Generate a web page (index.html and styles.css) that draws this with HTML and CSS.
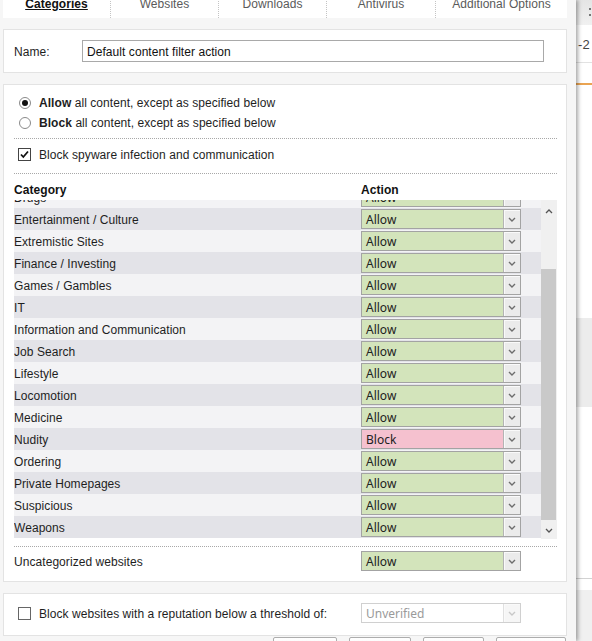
FILE: index.html
```html
<!DOCTYPE html>
<html lang="en">
<head>
    <meta charset="UTF-8">
    <title>Content Filter Action</title>
    <link rel="stylesheet" href="styles.css">
</head>
<body>
<div class="screen">
    <div class="dialog">
        <div class="tabs">
            <div class="tab tab-1 active"><span>Categories</span></div>
            <div class="tab tab-2"><span>Websites</span></div>
            <div class="tab tab-3"><span>Downloads</span></div>
            <div class="tab tab-4"><span>Antivirus</span></div>
            <div class="tab tab-5"><span>Additional Options</span></div>
        </div>

        <div class="panel name-panel">
            <span class="name-label">Name:</span>
            <div class="name-input">Default content filter action</div>
        </div>

        <div class="panel main-panel">
            <div class="mode">
                <div class="opt-row"><span class="radio checked"></span><span class="txt"><b>Allow</b> all content, except as specified below</span></div>
                <div class="opt-row"><span class="radio"></span><span class="txt"><b>Block</b> all content, except as specified below</span></div>
            </div>

            <div class="spyware">
                <div class="opt-row check-row">
                    <span class="check"><svg width="11" height="11" viewBox="0 0 11 11"><path d="M2 5.5 L4.3 8 L9 2.5" fill="none" stroke="#111" stroke-width="1.8"/></svg></span>
                    <span class="txt">Block spyware infection and communication</span>
                </div>
            </div>

            <div class="list-head">
                <span class="col-cat">Category</span>
                <span>Action</span>
            </div>

            <div class="list">
                <div class="rows-view">
                    <div class="rows">
                        <div class="row light"><span class="col-cat">Drugs</span><div class="select allow"><span class="val">Allow</span><span class="arrow"><svg width="8" height="5" viewBox="0 0 8 5"><path d="M1 1 L4 4 L7 1" fill="none" stroke="#6d6d6d" stroke-width="1.4"/></svg></span></div></div>
                        <div class="row dark"><span class="col-cat">Entertainment / Culture</span><div class="select allow"><span class="val">Allow</span><span class="arrow"><svg width="8" height="5" viewBox="0 0 8 5"><path d="M1 1 L4 4 L7 1" fill="none" stroke="#6d6d6d" stroke-width="1.4"/></svg></span></div></div>
                        <div class="row light"><span class="col-cat">Extremistic Sites</span><div class="select allow"><span class="val">Allow</span><span class="arrow"><svg width="8" height="5" viewBox="0 0 8 5"><path d="M1 1 L4 4 L7 1" fill="none" stroke="#6d6d6d" stroke-width="1.4"/></svg></span></div></div>
                        <div class="row dark"><span class="col-cat">Finance / Investing</span><div class="select allow"><span class="val">Allow</span><span class="arrow"><svg width="8" height="5" viewBox="0 0 8 5"><path d="M1 1 L4 4 L7 1" fill="none" stroke="#6d6d6d" stroke-width="1.4"/></svg></span></div></div>
                        <div class="row light"><span class="col-cat">Games / Gambles</span><div class="select allow"><span class="val">Allow</span><span class="arrow"><svg width="8" height="5" viewBox="0 0 8 5"><path d="M1 1 L4 4 L7 1" fill="none" stroke="#6d6d6d" stroke-width="1.4"/></svg></span></div></div>
                        <div class="row dark"><span class="col-cat">IT</span><div class="select allow"><span class="val">Allow</span><span class="arrow"><svg width="8" height="5" viewBox="0 0 8 5"><path d="M1 1 L4 4 L7 1" fill="none" stroke="#6d6d6d" stroke-width="1.4"/></svg></span></div></div>
                        <div class="row light"><span class="col-cat">Information and Communication</span><div class="select allow"><span class="val">Allow</span><span class="arrow"><svg width="8" height="5" viewBox="0 0 8 5"><path d="M1 1 L4 4 L7 1" fill="none" stroke="#6d6d6d" stroke-width="1.4"/></svg></span></div></div>
                        <div class="row dark"><span class="col-cat">Job Search</span><div class="select allow"><span class="val">Allow</span><span class="arrow"><svg width="8" height="5" viewBox="0 0 8 5"><path d="M1 1 L4 4 L7 1" fill="none" stroke="#6d6d6d" stroke-width="1.4"/></svg></span></div></div>
                        <div class="row light"><span class="col-cat">Lifestyle</span><div class="select allow"><span class="val">Allow</span><span class="arrow"><svg width="8" height="5" viewBox="0 0 8 5"><path d="M1 1 L4 4 L7 1" fill="none" stroke="#6d6d6d" stroke-width="1.4"/></svg></span></div></div>
                        <div class="row dark"><span class="col-cat">Locomotion</span><div class="select allow"><span class="val">Allow</span><span class="arrow"><svg width="8" height="5" viewBox="0 0 8 5"><path d="M1 1 L4 4 L7 1" fill="none" stroke="#6d6d6d" stroke-width="1.4"/></svg></span></div></div>
                        <div class="row light"><span class="col-cat">Medicine</span><div class="select allow"><span class="val">Allow</span><span class="arrow"><svg width="8" height="5" viewBox="0 0 8 5"><path d="M1 1 L4 4 L7 1" fill="none" stroke="#6d6d6d" stroke-width="1.4"/></svg></span></div></div>
                        <div class="row dark"><span class="col-cat">Nudity</span><div class="select block"><span class="val">Block</span><span class="arrow"><svg width="8" height="5" viewBox="0 0 8 5"><path d="M1 1 L4 4 L7 1" fill="none" stroke="#6d6d6d" stroke-width="1.4"/></svg></span></div></div>
                        <div class="row light"><span class="col-cat">Ordering</span><div class="select allow"><span class="val">Allow</span><span class="arrow"><svg width="8" height="5" viewBox="0 0 8 5"><path d="M1 1 L4 4 L7 1" fill="none" stroke="#6d6d6d" stroke-width="1.4"/></svg></span></div></div>
                        <div class="row dark"><span class="col-cat">Private Homepages</span><div class="select allow"><span class="val">Allow</span><span class="arrow"><svg width="8" height="5" viewBox="0 0 8 5"><path d="M1 1 L4 4 L7 1" fill="none" stroke="#6d6d6d" stroke-width="1.4"/></svg></span></div></div>
                        <div class="row light"><span class="col-cat">Suspicious</span><div class="select allow"><span class="val">Allow</span><span class="arrow"><svg width="8" height="5" viewBox="0 0 8 5"><path d="M1 1 L4 4 L7 1" fill="none" stroke="#6d6d6d" stroke-width="1.4"/></svg></span></div></div>
                        <div class="row dark"><span class="col-cat">Weapons</span><div class="select allow"><span class="val">Allow</span><span class="arrow"><svg width="8" height="5" viewBox="0 0 8 5"><path d="M1 1 L4 4 L7 1" fill="none" stroke="#6d6d6d" stroke-width="1.4"/></svg></span></div></div>
                    </div>
                </div>
                <div class="scrollbar">
                    <div class="sb-btn sb-up"><svg width="8" height="5" viewBox="0 0 8 5"><path d="M1 4 L4 1 L7 4" fill="none" stroke="#555" stroke-width="1.3"/></svg></div>
                    <div class="sb-track"></div>
                    <div class="sb-thumb"></div>
                    <div class="sb-btn sb-down"><svg width="8" height="5" viewBox="0 0 8 5"><path d="M1 1 L4 4 L7 1" fill="none" stroke="#555" stroke-width="1.3"/></svg></div>
                </div>
            </div>

            <div class="uncat">
                <span class="col-cat">Uncategorized websites</span>
                <div class="select allow"><span class="val">Allow</span><span class="arrow"><svg width="8" height="5" viewBox="0 0 8 5"><path d="M1 1 L4 4 L7 1" fill="none" stroke="#6d6d6d" stroke-width="1.4"/></svg></span></div>
            </div>
        </div>

        <div class="panel rep-panel">
            <div class="rep-label">
                <span class="check empty"></span>
                <span class="txt">Block websites with a reputation below a threshold of:</span>
            </div>
            <div class="select disabled"><span class="val">Unverified</span><span class="arrow"><svg width="8" height="5" viewBox="0 0 8 5"><path d="M1 1 L4 4 L7 1" fill="none" stroke="#c8c8c8" stroke-width="1.4"/></svg></span></div>
        </div>

        <div class="buttons">
            <span class="btn w64"></span>
            <span class="btn w62"></span>
            <span class="btn w60"></span>
            <span class="btn w70"></span>
        </div>
    </div>

    <div class="backdrop">
        <div class="bd-top"><span class="bd-dots"></span></div>
        <div class="bd-head">-2</div>
        <div class="bd-space"></div>
        <div class="bd-orange"></div>
        <div class="bd-white"></div>
        <div class="bd-gray"></div>
        <div class="bd-white2"></div>
        <div class="bd-foot"></div>
    </div>
</div>
</body>
</html>
```

FILE: styles.css
```css
* {
    margin: 0;
    padding: 0;
    box-sizing: border-box;
}

body {
    width: 592px;
    height: 641px;
    overflow: hidden;
    background: #fff;
    font-family: "Liberation Sans", Arial, sans-serif;
    font-size: 12px;
    letter-spacing: 0.06px;
    color: #1e1e1e;
}

.screen {
    display: flex;
    height: 641px;
}

.dialog {
    width: 576px;
    flex-shrink: 0;
    background: #f6f6f6;
    box-shadow: 2px 0 4px rgba(0, 0, 0, 0.35);
    position: relative;
    z-index: 2;
}

/* tabs */
.tabs {
    display: flex;
    height: 28px;
    margin: -10px 9px 0 3px;
    background: #fff;
}

.tab {
    display: flex;
    align-items: center;
    justify-content: center;
    color: #5a5a5a;
    border-left: 1px dotted #c4c4c4;
}

.tab-1 { width: 107px; border-left: none; }
.tab-2 { width: 108px; }
.tab-3 { width: 108px; }
.tab-4 { width: 109px; }
.tab-5 { flex: 1; }

.tab.active {
    color: #111;
    font-weight: bold;
    text-decoration: underline;
}

/* panels */
.panel {
    background: #fff;
    border: 1px solid #e3e3e3;
    margin: 11px 9px 0 3px;
}

.name-panel {
    height: 44px;
    display: flex;
    align-items: center;
    padding-left: 10px;
}

.name-label {
    width: 68px;
    padding-top: 1px;
}

.name-input {
    width: 462px;
    height: 22px;
    border: 1px solid #a9a9a9;
    padding: 1px 0 0 4px;
    line-height: 20px;
    color: #111;
}

.main-panel {
    height: 498px;
    padding: 0 9px 0 10px;
}

.opt-row {
    display: flex;
    align-items: center;
    height: 20px;
}

.txt {
    padding-top: 1px;
}

.mode {
    padding: 7px 0 6px;
    border-bottom: 1px dotted #a8a8a8;
}

.radio {
    width: 12px;
    height: 12px;
    margin: 1px 8px 0 5px;
    border: 1px solid #8a8a8a;
    border-radius: 50%;
    background: #fff;
    display: flex;
    align-items: center;
    justify-content: center;
}

.radio.checked::after {
    content: "";
    width: 6px;
    height: 6px;
    border-radius: 50%;
    background: #111;
}

.spyware {
    padding: 5px 0 9px;
    border-bottom: 1px dotted #a8a8a8;
}

.check {
    width: 13px;
    height: 13px;
    margin: 0 8px 0 4px;
    border: 1px solid #444;
    background: #fff;
    display: flex;
    align-items: center;
    justify-content: center;
}

.check.empty {
    border-color: #666;
}

.list-head {
    display: flex;
    height: 26px;
    padding-top: 9px;
    line-height: 14px;
    font-weight: bold;
    color: #111;
}

.col-cat {
    width: 347px;
    flex-shrink: 0;
}

.row .col-cat,
.uncat .col-cat {
    padding-top: 1px;
}

/* category list */
.list {
    display: flex;
    height: 339px;
}

.rows-view {
    flex: 1;
    overflow: hidden;
}

.rows {
    margin-top: -14px;
}

.row {
    display: flex;
    align-items: center;
    height: 22px;
}

.row.dark { background: #e3e3e8; }
.row.light { background: #f3f3f5; }

.select {
    width: 160px;
    height: 20px;
    display: flex;
    border: 1px solid #a3a3a3;
    font-family: "Noto Sans", "Open Sans", sans-serif;
    font-size: 12px;
    letter-spacing: 0;
    color: #222;
}

.select .val {
    flex: 1;
    padding: 1px 0 0 4px;
    line-height: 18px;
}

.select .arrow {
    width: 17px;
    display: flex;
    align-items: center;
    justify-content: center;
    background: #ebebeb;
    border-left: 1px solid #b4b4b4;
    box-shadow: inset 1px 1px 0 #fafafa;
}

.select.allow { background: #d3e4bb; }
.select.block { background: #f5c1cf; }

.select.disabled {
    background: #fff;
    border-color: #d0d0d0;
    color: #9a9a9a;
}

.select.disabled .arrow {
    background: #f6f6f6;
    border-left-color: #e0e0e0;
}

.scrollbar {
    width: 16px;
    display: flex;
    flex-direction: column;
    background: #f0f0f0;
}

.sb-btn {
    display: flex;
    align-items: center;
    justify-content: center;
}

.sb-up { height: 22px; }
.sb-track { height: 47px; }
.sb-down { height: 19px; padding-top: 1px; }

.sb-thumb {
    height: 251px;
    width: 15px;
    background: #c9c9c9;
}

.uncat {
    display: flex;
    align-items: center;
    margin-top: 7px;
    padding: 4px 0 10px;
    border-top: 1px dotted #a8a8a8;
}

.rep-panel {
    height: 43px;
    display: flex;
    align-items: flex-start;
    padding: 9px 0 0 10px;
}

.rep-label {
    width: 347px;
    height: 20px;
    display: flex;
    align-items: center;
}

.buttons {
    display: flex;
    justify-content: flex-end;
    gap: 12px;
    margin-top: 1px;
    padding-right: 10px;
}

.btn {
    height: 24px;
    border: 1px solid #adadad;
    border-radius: 2px;
    background: linear-gradient(#fff, #ececec);
}

.w64 { width: 64px; }
.w62 { width: 62px; }
.w60 { width: 61px; }
.w70 { width: 70px; }

/* page behind the dialog */
.backdrop {
    flex: 1;
    display: flex;
    flex-direction: column;
    font-family: "Liberation Sans", Arial, sans-serif;
    color: #444;
}

.bd-top {
    height: 25px;
    background: linear-gradient(#e4e4e4, #f1f1f1);
    position: relative;
}

.bd-dots {
    position: absolute;
    right: 1px;
    top: 8px;
    width: 2px;
    height: 8px;
    border-top: 2px solid #777;
    border-bottom: 2px solid #777;
}

.bd-head {
    height: 38px;
    line-height: 40px;
    padding-left: 2px;
    border-bottom: 1px solid #e2e2e2;
    font-size: 13px;
}

.bd-space { height: 20px; }
.bd-orange { height: 2px; background: #eaa452; }
.bd-white { height: 233px; }
.bd-gray { height: 89px; background: #ececec; }
.bd-white2 { height: 172px; border-bottom: 1px solid #d2d2d2; }
.bd-foot { flex: 1; background: linear-gradient(#fff 11px, #f0f0f0 11px); }
```
